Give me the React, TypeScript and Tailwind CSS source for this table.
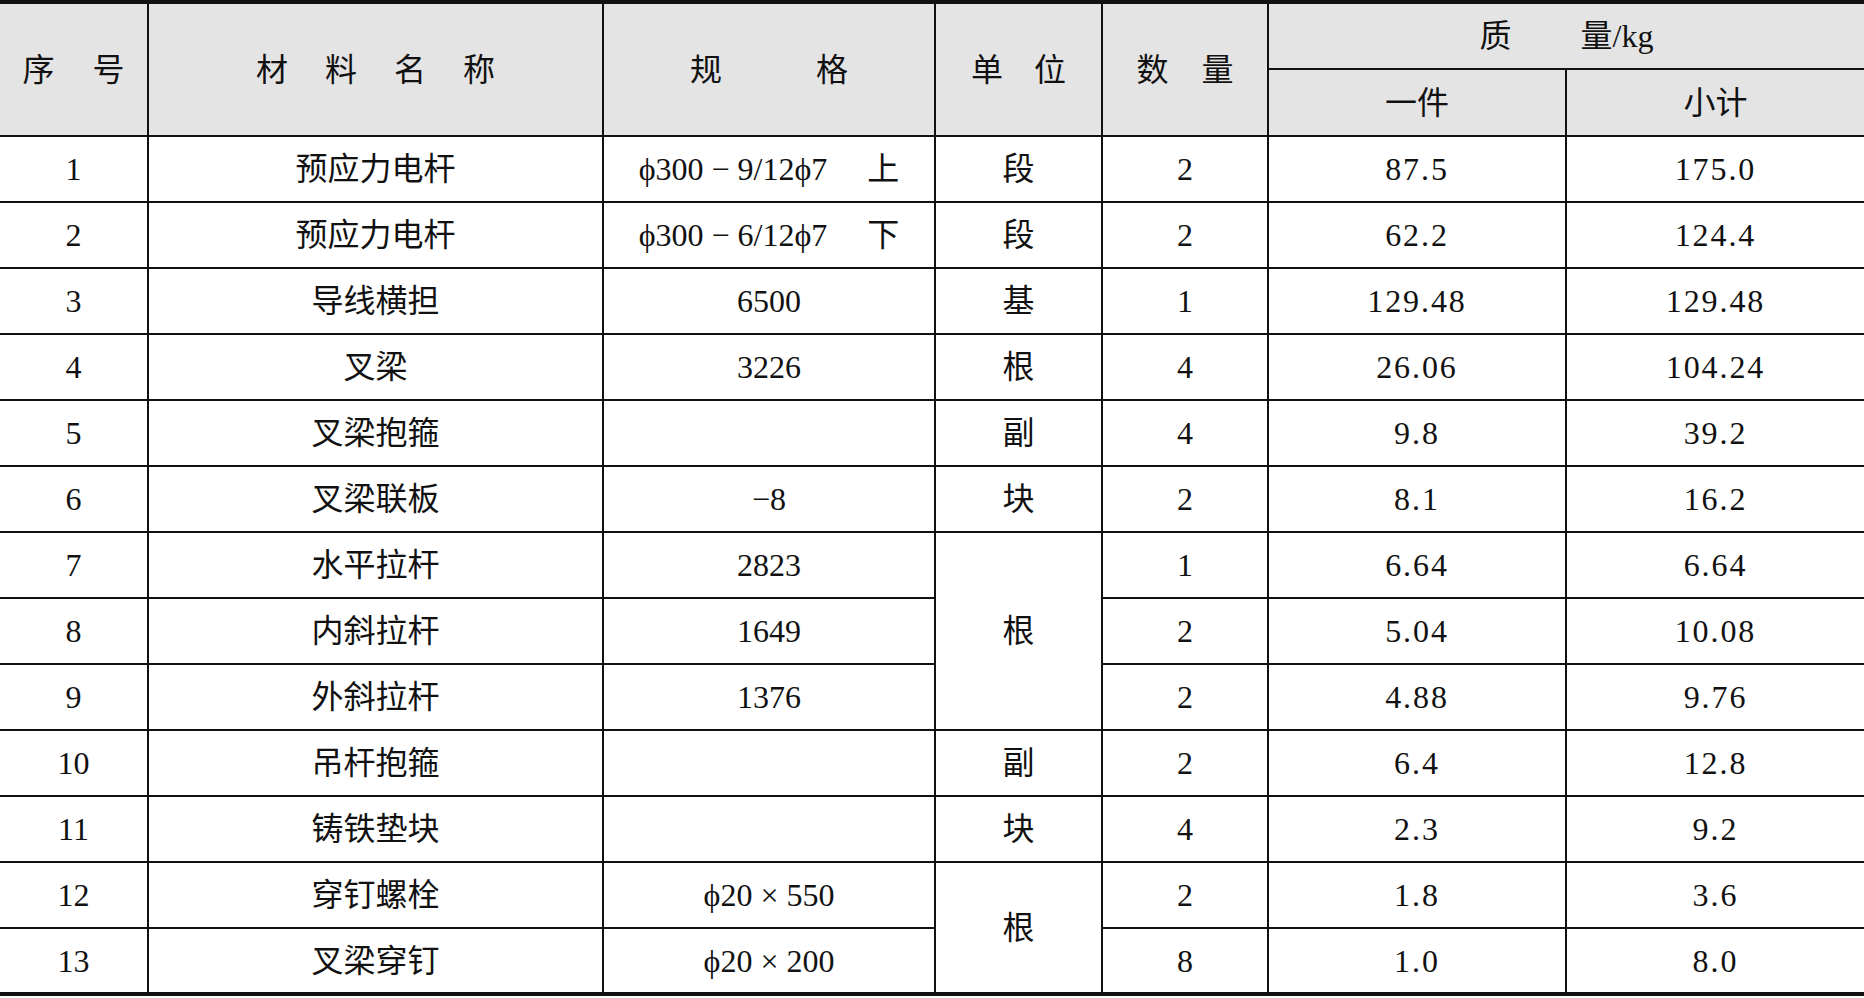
const rows = [
  { no: "1", name: "预应力电杆", spec: "ϕ300 − 9/12ϕ7　 上", unit: "段", qty: "2", one: "87.5", sum: "175.0" },
  { no: "2", name: "预应力电杆", spec: "ϕ300 − 6/12ϕ7　 下", unit: "段", qty: "2", one: "62.2", sum: "124.4" },
  { no: "3", name: "导线横担", spec: "6500", unit: "基", qty: "1", one: "129.48", sum: "129.48" },
  { no: "4", name: "叉梁", spec: "3226", unit: "根", qty: "4", one: "26.06", sum: "104.24" },
  { no: "5", name: "叉梁抱箍", spec: "", unit: "副", qty: "4", one: "9.8", sum: "39.2" },
  { no: "6", name: "叉梁联板", spec: "−8", unit: "块", qty: "2", one: "8.1", sum: "16.2" },
  { no: "7", name: "水平拉杆", spec: "2823", unit: "根", span: 3, qty: "1", one: "6.64", sum: "6.64" },
  { no: "8", name: "内斜拉杆", spec: "1649", unit: null, qty: "2", one: "5.04", sum: "10.08" },
  { no: "9", name: "外斜拉杆", spec: "1376", unit: null, qty: "2", one: "4.88", sum: "9.76" },
  { no: "10", name: "吊杆抱箍", spec: "", unit: "副", qty: "2", one: "6.4", sum: "12.8" },
  { no: "11", name: "铸铁垫块", spec: "", unit: "块", qty: "4", one: "2.3", sum: "9.2" },
  { no: "12", name: "穿钉螺栓", spec: "ϕ20 × 550", unit: "根", span: 2, qty: "2", one: "1.8", sum: "3.6" },
  { no: "13", name: "叉梁穿钉", spec: "ϕ20 × 200", unit: null, qty: "8", one: "1.0", sum: "8.0" },
];

const cell = "border-2 border-[#111] text-center align-middle p-0";

const Spaced = ({ chars, gap }: { chars: string[]; gap: string }) => (
  <div className={`flex justify-center ${gap}`}>
    {chars.map((c, i) => (
      <span key={i}>{c}</span>
    ))}
  </div>
);

export default function App() {
  return (
    <div
      className="w-[1864px] h-[998px] bg-white text-[#111] overflow-hidden"
      style={{ fontFamily: '"Liberation Serif", "Noto Sans CJK SC", serif' }}
    >
      <table className="w-full table-fixed border-collapse border-t-4 border-b-4 border-[#111] text-[32px] leading-none">
        <colgroup>
          <col className="w-[148px]" />
          <col className="w-[455px]" />
          <col className="w-[332px]" />
          <col className="w-[167px]" />
          <col className="w-[166px]" />
          <col className="w-[298px]" />
          <col />
        </colgroup>
        <thead className="bg-[#e4e4e4]">
          <tr className="h-[67px]">
            <th rowSpan={2} className={`${cell} border-l-0 font-normal`}>
              <Spaced chars={["序", "号"]} gap="gap-[38px]" />
            </th>
            <th rowSpan={2} className={`${cell} font-normal`}>
              <Spaced chars={["材", "料", "名", "称"]} gap="gap-[37px]" />
            </th>
            <th rowSpan={2} className={`${cell} font-normal`}>
              <Spaced chars={["规", "格"]} gap="gap-[94px]" />
            </th>
            <th rowSpan={2} className={`${cell} font-normal`}>
              <Spaced chars={["单", "位"]} gap="gap-[31px]" />
            </th>
            <th rowSpan={2} className={`${cell} font-normal`}>
              <Spaced chars={["数", "量"]} gap="gap-[33px]" />
            </th>
            <th colSpan={2} className={`${cell} border-r-0 font-normal`}>
              <div className="flex justify-center gap-[69px]">
                <span>质</span>
                <span>量/kg</span>
              </div>
            </th>
          </tr>
          <tr className="h-[67px]">
            <th className={`${cell} font-normal`}>一件</th>
            <th className={`${cell} border-r-0 font-normal`}>小计</th>
          </tr>
        </thead>
        <tbody>
          {rows.map((r) => (
            <tr key={r.no} className="h-[66px]">
              <td className={`${cell} border-l-0`}>{r.no}</td>
              <td className={cell}>{r.name}</td>
              <td className={`${cell} whitespace-pre`}>{r.spec}</td>
              {r.unit !== null && (
                <td rowSpan={r.span ?? 1} className={cell}>
                  {r.unit}
                </td>
              )}
              <td className={cell}>{r.qty}</td>
              <td className={`${cell} tracking-[0.06em]`}>{r.one}</td>
              <td className={`${cell} border-r-0 tracking-[0.06em]`}>{r.sum}</td>
            </tr>
          ))}
        </tbody>
      </table>
    </div>
  );
}
